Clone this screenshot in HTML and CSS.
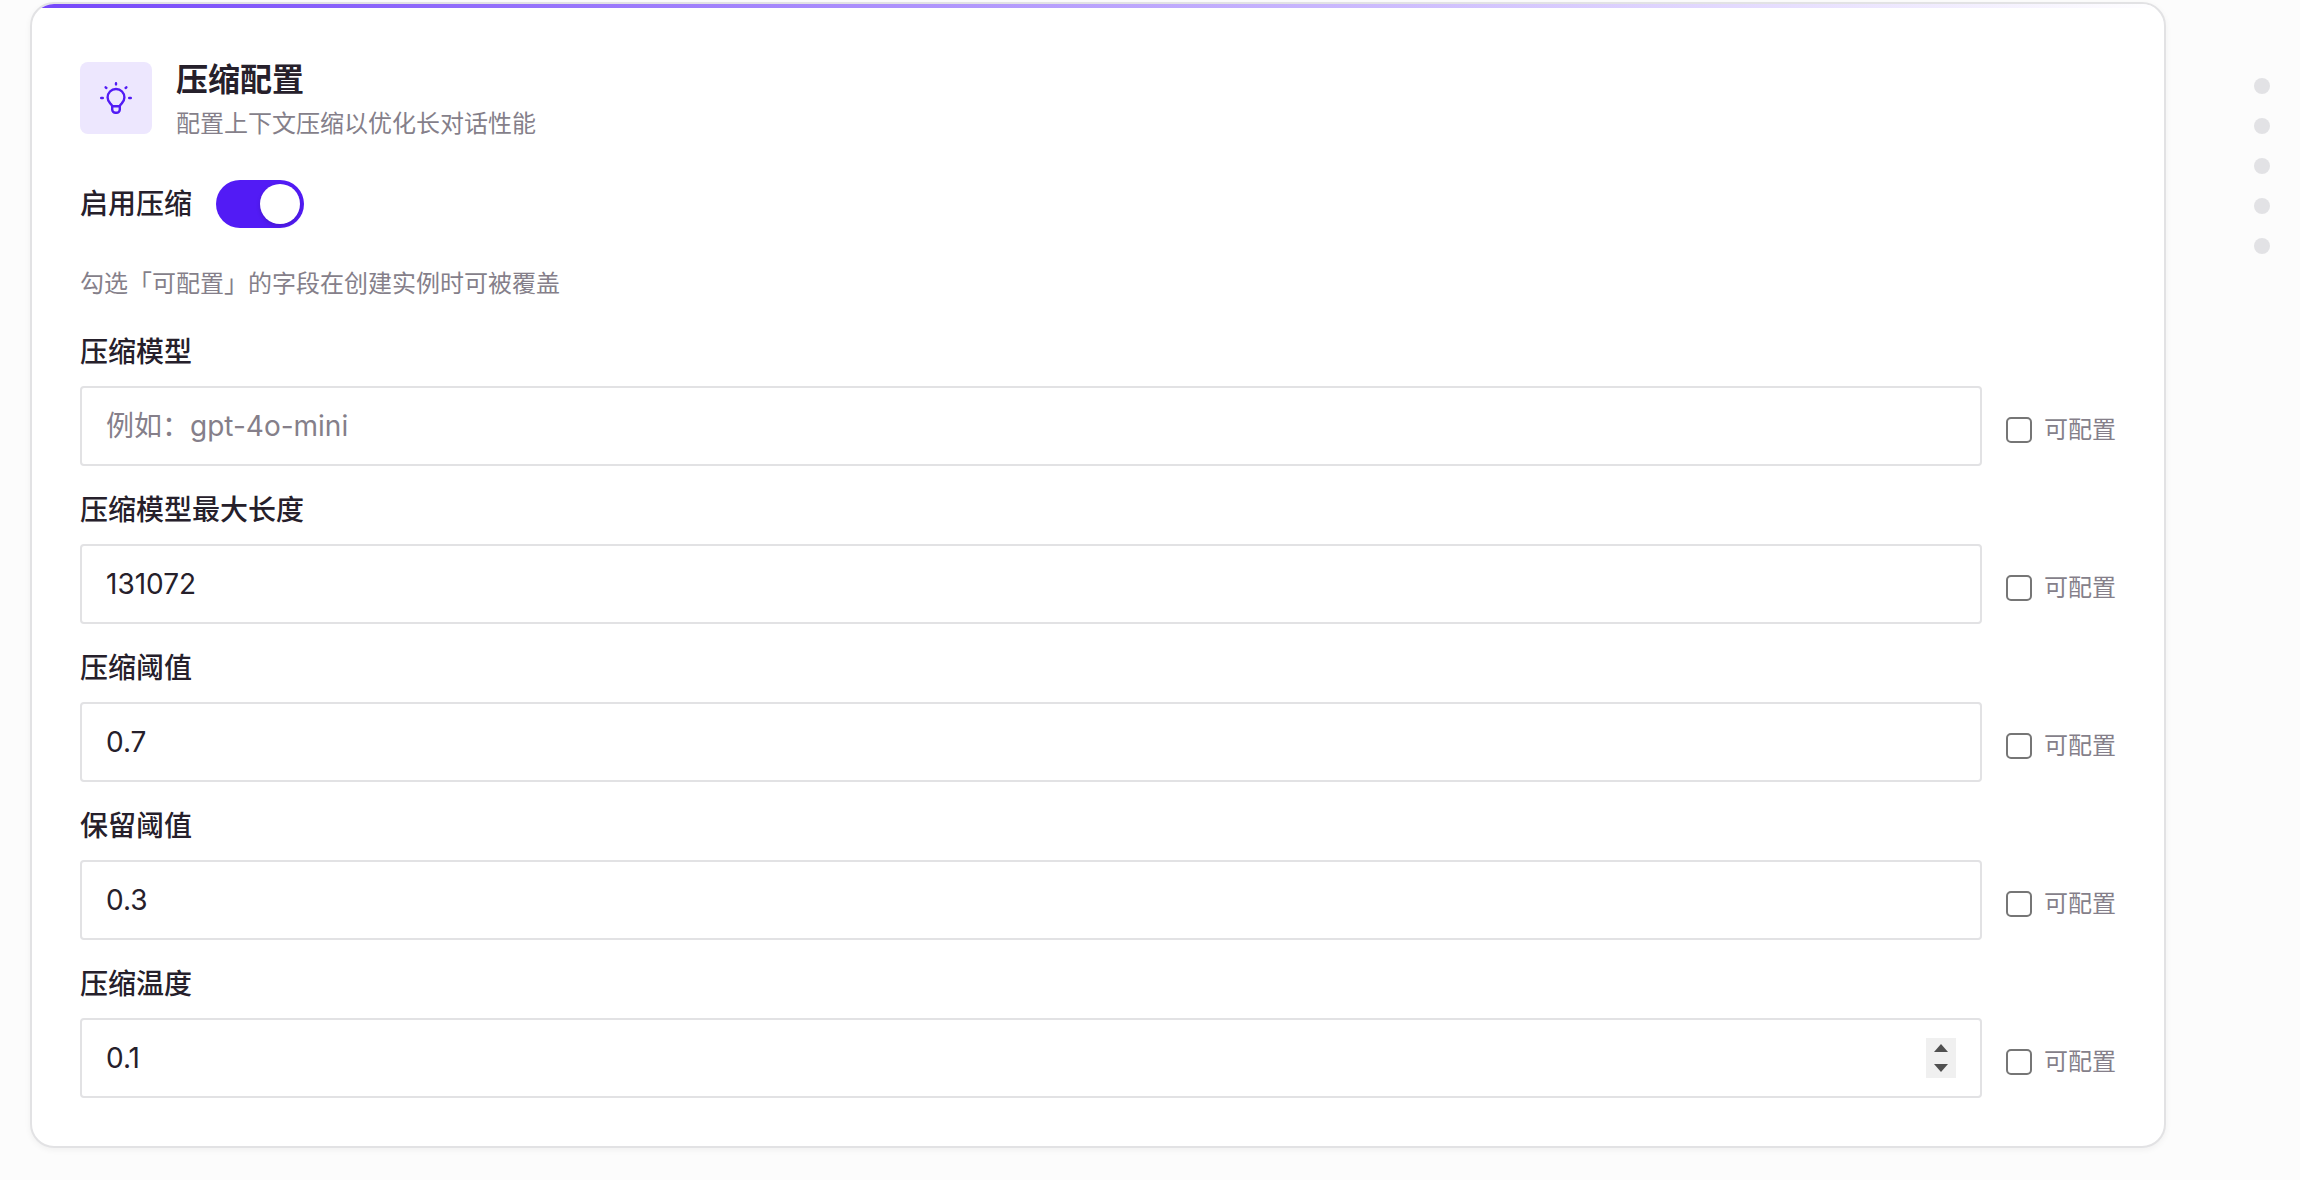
FILE: index.html
```html
<!DOCTYPE html>
<html lang="zh-CN">
<head>
  <meta charset="utf-8">
  <meta name="viewport" content="width=device-width, initial-scale=1">
  <title>压缩配置</title>
  <link rel="stylesheet" href="styles.css">
</head>
<body>
  <div class="page">
    <main class="card">
      <header class="card-header">
        <span class="card-icon">
          <svg viewBox="0 0 36 36" fill="none" stroke="currentColor" stroke-width="2.4" stroke-linecap="round" stroke-linejoin="round" aria-hidden="true">
            <path d="M14.200 26.200c-.2-1.200-1-1.800-1.900-2.700a8.400 8.400 0 1 1 11.400 0c-.9.900-1.700 1.500-1.900 2.700v3.300a3.300 3.300 0 0 1-3.300 3.300h-1a3.300 3.300 0 0 1-3.300-3.300zM14.200 26.200h7.600M18 3.200v1.200M7.600 7.300l.8.7M28.400 7.300l-.8.7M3.200 18h1.600M31.200 18h1.600"/>
          </svg>
        </span>
        <div class="card-heading">
          <h1 class="card-title">压缩配置</h1>
          <p class="card-subtitle">配置上下文压缩以优化长对话性能</p>
        </div>
      </header>

      <div class="switch-row">
        <label class="label" for="enable">启用压缩</label>
        <input class="switch" type="checkbox" role="switch" id="enable" checked>
      </div>

      <p class="hint">勾选「可配置」的字段在创建实例时可被覆盖</p>

      <form class="fields">
        <div class="field">
          <label class="label" for="model">压缩模型</label>
          <div class="field-row">
            <div class="control"><input class="control-input" id="model" type="text" placeholder="例如：gpt-4o-mini"></div>
            <label class="option"><input class="checkbox" type="checkbox">可配置</label>
          </div>
        </div>
        <div class="field">
          <label class="label" for="max-length">压缩模型最大长度</label>
          <div class="field-row">
            <div class="control"><input class="control-input" id="max-length" type="number" value="131072"></div>
            <label class="option"><input class="checkbox" type="checkbox">可配置</label>
          </div>
        </div>
        <div class="field">
          <label class="label" for="threshold">压缩阈值</label>
          <div class="field-row">
            <div class="control"><input class="control-input" id="threshold" type="number" step="0.1" value="0.7"></div>
            <label class="option"><input class="checkbox" type="checkbox">可配置</label>
          </div>
        </div>
        <div class="field">
          <label class="label" for="keep">保留阈值</label>
          <div class="field-row">
            <div class="control"><input class="control-input" id="keep" type="number" step="0.1" value="0.3"></div>
            <label class="option"><input class="checkbox" type="checkbox">可配置</label>
          </div>
        </div>
        <div class="field">
          <label class="label" for="temperature">压缩温度</label>
          <div class="field-row">
            <div class="control">
              <input class="control-input" id="temperature" type="number" step="0.1" value="0.1">
              <span class="stepper">
                <button class="step" type="button" aria-label="增加"><svg viewBox="0 0 14 8" aria-hidden="true"><path d="M0 8 7 0l7 8z"/></svg></button>
                <button class="step" type="button" aria-label="减少"><svg viewBox="0 0 14 8" aria-hidden="true"><path d="M0 0h14L7 8z"/></svg></button>
              </span>
            </div>
            <label class="option"><input class="checkbox" type="checkbox">可配置</label>
          </div>
        </div>
      </form>
    </main>

    <nav class="rail" aria-label="页面导航">
      <button class="dot" type="button" aria-label="第 1 节"></button>
      <button class="dot" type="button" aria-label="第 2 节"></button>
      <button class="dot" type="button" aria-label="第 3 节"></button>
      <button class="dot" type="button" aria-label="第 4 节"></button>
      <button class="dot" type="button" aria-label="第 5 节"></button>
    </nav>
  </div>
</body>
</html>
```

FILE: styles.css
```css
:root {
  --text: #26202b;
  --muted: #857f8a;
  --line: #e2e2e4;
  --accent: #521bf5;
}

* {
  box-sizing: border-box;
}

body {
  margin: 0;
  background: #fcfcfc;
  color: var(--text);
  font-family: Inter, "Noto Sans CJK SC", sans-serif;
  font-size: 28px;
  line-height: 40px;
}

h1,
p {
  margin: 0;
}

.page {
  display: flex;
  align-items: flex-start;
  gap: 88px;
  padding: 2px 30px 24px;
}

.card {
  position: relative;
  flex: 1;
  min-width: 0;
  overflow: hidden;
  padding: 58px 48px 48px;
  border: 2px solid var(--line);
  border-radius: 24px;
  background: #fff;
  box-shadow: 0 2px 6px rgba(0, 0, 0, 0.05);
}

.card::before {
  content: "";
  position: absolute;
  inset: 0 0 auto;
  height: 4px;
  background: linear-gradient(90deg, #7547fa, #fff);
}

.card-header {
  display: flex;
  align-items: flex-start;
  gap: 24px;
}

.card-icon {
  display: grid;
  place-items: center;
  width: 72px;
  height: 72px;
  border-radius: 8px;
  background: #ede7fe;
  color: var(--accent);
}

.card-icon svg {
  width: 36px;
  height: 36px;
}

.card-title {
  font-size: 32px;
  font-weight: 600;
  line-height: 36px;
}

.card-subtitle {
  margin-top: 8px;
  color: var(--muted);
  font-size: 24px;
  line-height: 36px;
}

.label {
  height: 40px;
  font-weight: 500;
}

.switch-row {
  display: flex;
  align-items: center;
  gap: 24px;
  margin-top: 38px;
}

.switch {
  appearance: none;
  width: 88px;
  height: 48px;
  margin: 0;
  padding: 4px;
  border-radius: 24px;
  background: #d4d4d8;
}

.switch::before {
  content: "";
  display: block;
  width: 40px;
  height: 40px;
  border-radius: 50%;
  background: #fff;
  box-shadow: 0 2px 4px rgba(0, 0, 0, 0.15);
}

.switch:checked {
  background: var(--accent);
}

.switch:checked::before {
  margin-left: auto;
}

.hint {
  margin-top: 38px;
  color: var(--muted);
  font-size: 24px;
  line-height: 36px;
}

.fields {
  display: grid;
  gap: 24px;
  margin-top: 30px;
}

.field {
  display: grid;
  gap: 14px;
}

.field-row {
  display: grid;
  grid-template-columns: 1fr 110px;
  align-items: center;
  gap: 24px;
}

.control {
  display: flex;
  align-items: center;
  gap: 24px;
  height: 80px;
  padding: 0 24px;
  border: 2px solid var(--line);
  border-radius: 4px;
  background: #fff;
}

.control-input {
  flex: 1;
  min-width: 0;
  padding: 0;
  border: 0;
  outline: 0;
  background: transparent;
  color: inherit;
  font: inherit;
  appearance: textfield;
}

.control-input::-webkit-inner-spin-button {
  appearance: none;
  margin: 0;
}

.control-input::placeholder {
  color: var(--muted);
}

.stepper {
  display: grid;
  width: 30px;
  background: #f0f0f0;
}

.step {
  display: grid;
  place-items: center;
  height: 20px;
  padding: 0;
  border: 0;
  background: transparent;
}

.step svg {
  width: 14px;
  height: 8px;
  fill: #505050;
}

.option {
  display: flex;
  align-items: center;
  gap: 12px;
  padding-top: 8px;
  color: var(--muted);
  font-size: 24px;
  line-height: 36px;
  white-space: nowrap;
}

.checkbox {
  appearance: none;
  width: 26px;
  height: 26px;
  margin: 0;
  border: 2px solid #767676;
  border-radius: 5px;
  background: #fff;
}

.checkbox:checked {
  border-color: var(--accent);
  background: var(--accent);
}

.rail {
  display: grid;
  gap: 24px;
  padding-top: 76px;
}

.dot {
  width: 16px;
  height: 16px;
  padding: 0;
  border: 0;
  border-radius: 50%;
  background: #e2e2e5;
}
```
